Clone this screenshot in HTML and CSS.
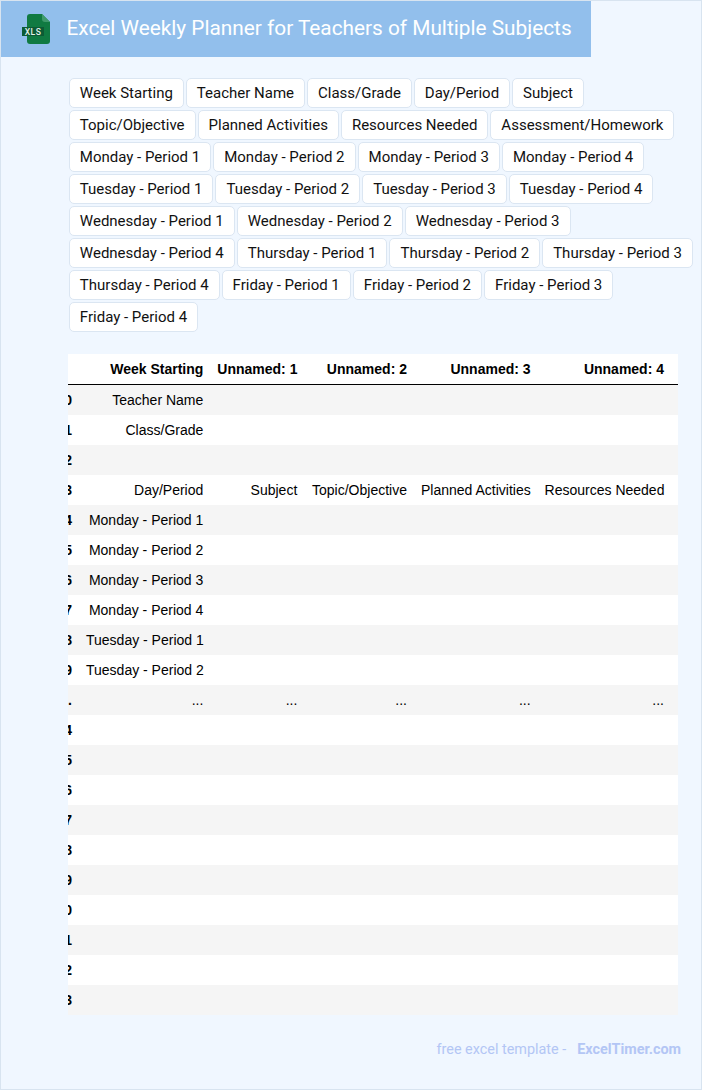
FILE: index.html
```html
<!DOCTYPE html>
<html lang="en">
<head>
<meta charset="utf-8">
<title>Excel Weekly Planner for Teachers of Multiple Subjects</title>
<link rel="stylesheet" href="styles.css">
</head>
<body>
<div class="page">
  <header class="banner">
    <svg class="logo" width="30" height="32" viewBox="0 0 30 32" aria-hidden="true">
      <path class="logo-sheet" d="M8 0h12l8 8v19a3 3 0 0 1-3 3H8a3 3 0 0 1-3-3V3a3 3 0 0 1 3-3z"/>
      <path class="logo-fold" d="M20 0l8 8h-5a3 3 0 0 1-3-3z"/>
      <rect class="logo-band" x="0" y="13" width="22" height="9"/>
      <text class="logo-text" x="11" y="20.6" text-anchor="middle">XLS</text>
    </svg>
    <h1 class="title">Excel Weekly Planner for Teachers of Multiple Subjects</h1>
  </header>

  <ul class="tags">
    <li class="tag">Week Starting</li>
    <li class="tag">Teacher Name</li>
    <li class="tag">Class/Grade</li>
    <li class="tag">Day/Period</li>
    <li class="tag">Subject</li>
    <li class="tag">Topic/Objective</li>
    <li class="tag">Planned Activities</li>
    <li class="tag">Resources Needed</li>
    <li class="tag">Assessment/Homework</li>
    <li class="tag">Monday - Period 1</li>
    <li class="tag">Monday - Period 2</li>
    <li class="tag">Monday - Period 3</li>
    <li class="tag">Monday - Period 4</li>
    <li class="tag">Tuesday - Period 1</li>
    <li class="tag">Tuesday - Period 2</li>
    <li class="tag">Tuesday - Period 3</li>
    <li class="tag">Tuesday - Period 4</li>
    <li class="tag">Wednesday - Period 1</li>
    <li class="tag">Wednesday - Period 2</li>
    <li class="tag">Wednesday - Period 3</li>
    <li class="tag">Wednesday - Period 4</li>
    <li class="tag">Thursday - Period 1</li>
    <li class="tag">Thursday - Period 2</li>
    <li class="tag">Thursday - Period 3</li>
    <li class="tag">Thursday - Period 4</li>
    <li class="tag">Friday - Period 1</li>
    <li class="tag">Friday - Period 2</li>
    <li class="tag">Friday - Period 3</li>
    <li class="tag">Friday - Period 4</li>
  </ul>

  <div class="table-wrap">
    <table class="sheet">
      <colgroup>
        <col class="c-idx"><col class="c-a"><col class="c-b"><col class="c-c"><col class="c-d"><col class="c-e">
      </colgroup>
      <thead>
        <tr><th></th><th>Week Starting</th><th>Unnamed: 1</th><th>Unnamed: 2</th><th>Unnamed: 3</th><th>Unnamed: 4</th></tr>
      </thead>
      <tbody>
        <tr><th>0</th><td>Teacher Name</td><td></td><td></td><td></td><td></td></tr>
        <tr><th>1</th><td>Class/Grade</td><td></td><td></td><td></td><td></td></tr>
        <tr><th>2</th><td></td><td></td><td></td><td></td><td></td></tr>
        <tr><th>3</th><td>Day/Period</td><td>Subject</td><td>Topic/Objective</td><td>Planned Activities</td><td>Resources Needed</td></tr>
        <tr><th>4</th><td>Monday - Period 1</td><td></td><td></td><td></td><td></td></tr>
        <tr><th>5</th><td>Monday - Period 2</td><td></td><td></td><td></td><td></td></tr>
        <tr><th>6</th><td>Monday - Period 3</td><td></td><td></td><td></td><td></td></tr>
        <tr><th>7</th><td>Monday - Period 4</td><td></td><td></td><td></td><td></td></tr>
        <tr><th>8</th><td>Tuesday - Period 1</td><td></td><td></td><td></td><td></td></tr>
        <tr><th>9</th><td>Tuesday - Period 2</td><td></td><td></td><td></td><td></td></tr>
        <tr><th>...</th><td>...</td><td>...</td><td>...</td><td>...</td><td>...</td></tr>
        <tr><th>24</th><td></td><td></td><td></td><td></td><td></td></tr>
        <tr><th>25</th><td></td><td></td><td></td><td></td><td></td></tr>
        <tr><th>26</th><td></td><td></td><td></td><td></td><td></td></tr>
        <tr><th>27</th><td></td><td></td><td></td><td></td><td></td></tr>
        <tr><th>28</th><td></td><td></td><td></td><td></td><td></td></tr>
        <tr><th>29</th><td></td><td></td><td></td><td></td><td></td></tr>
        <tr><th>30</th><td></td><td></td><td></td><td></td><td></td></tr>
        <tr><th>31</th><td></td><td></td><td></td><td></td><td></td></tr>
        <tr><th>32</th><td></td><td></td><td></td><td></td><td></td></tr>
        <tr><th>33</th><td></td><td></td><td></td><td></td><td></td></tr>
      </tbody>
    </table>
  </div>

  <footer class="foot">
    <span>free excel template -</span>
    <a class="foot-link" href="#">ExcelTimer.com</a>
  </footer>
</div>
</body>
</html>
```
FILE: styles.css
```css
* { box-sizing: border-box; }

html, body {
  margin: 0;
  padding: 0;
}

body {
  font-family: "Roboto", "Liberation Sans", sans-serif;
  background: #f0f7ff;
}

.page {
  width: 702px;
  height: 1090px;
  border: 1px solid #d8e4f0;
  background: #f0f7ff;
  overflow: hidden;
}

.banner {
  width: 590px;
  height: 56px;
  background: #92bfec;
  display: flex;
  align-items: center;
  padding-left: 21px;
}

.logo {
  flex: none;
  margin-right: 14.5px;
  margin-top: 1px;
}

.logo-sheet { fill: #107a42; }
.logo-fold { fill: #3f9a6b; }
.logo-band { fill: #0c5b35; }
.logo-text {
  font-family: "Roboto", sans-serif;
  font-size: 8.5px;
  font-weight: 500;
  fill: #e4f2ea;
  letter-spacing: 0.5px;
}

.title {
  margin: 0 0 2px;
  font-size: 20.8px;
  font-weight: 400;
  color: #fff;
  white-space: nowrap;
}

.tags {
  list-style: none;
  margin: 21px 0 0 67.85px;
  padding: 0;
  display: flex;
  flex-wrap: wrap;
  gap: 2px;
}

.tag {
  height: 30px;
  padding: 0 10px;
  border: 1px solid #dbe6f2;
  border-radius: 5px;
  background: #fff;
  color: #111;
  font-size: 15px;
  line-height: 28px;
  white-space: nowrap;
}

.table-wrap {
  width: 610px;
  margin: 22px 0 0 67px;
  overflow: hidden;
}

.sheet {
  border-collapse: separate;
  border-spacing: 0;
  table-layout: fixed;
  width: 636px;
  margin-left: -26px;
  font-family: "Liberation Sans", Arial, sans-serif;
  font-size: 14px;
  color: #000;
  background: #fff;
}

.c-idx { width: 37px; }
.c-a { width: 131.3px; }
.c-b { width: 94px; }
.c-c { width: 109.7px; }
.c-d { width: 123.6px; }
.c-e { width: 140.4px; }

.sheet th,
.sheet td {
  padding: 0 7px;
  text-align: right;
  white-space: nowrap;
  height: 30px;
}

.sheet th:last-child,
.sheet td:last-child { padding-right: 14px; }

.sheet th { font-weight: 700; }
.sheet td { font-weight: 400; }

.sheet thead th {
  height: 31px;
  border-bottom: 1px solid #000;
}

.sheet tbody tr:nth-child(odd) { background: #f5f5f5; }
.sheet tbody tr:nth-child(even) { background: #fff; }

.foot {
  margin: 25px 20px 0 0;
  display: flex;
  justify-content: flex-end;
  gap: 11px;
  font-size: 14.4px;
  line-height: 20px;
  color: #b3c6f5;
}

.foot-link {
  color: #b3c6f5;
  font-weight: 700;
  text-decoration: none;
}
```
